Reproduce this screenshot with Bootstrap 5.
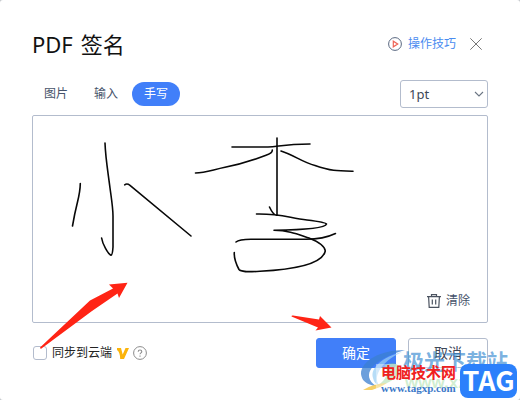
<!DOCTYPE html>
<html lang="zh-CN">
<head>
<meta charset="utf-8">
<meta name="viewport" content="width=device-width, initial-scale=1">
<title>PDF 签名</title>
<link href="https://cdn.jsdelivr.net/npm/bootstrap@5.3.0/dist/css/bootstrap.min.css" rel="stylesheet">
<style>
  body { font-family: "Noto Sans", "Noto Sans CJK SC", sans-serif; font-size: 12px; line-height: 18px; color: #46536a; background: #c4c7cc; }
  .sign-dialog { padding: 28px 32px; min-height: 100vh; background: #fff; border-radius: 3px; }
  .sign-title { font-size: 22px; line-height: 32px; font-weight: 400; color: #111; gap: 8px; }
  .tips-link { color: #4a8cf0; gap: 6px; }
  .plain-btn { background: none; border: 0; padding: 0; color: inherit; line-height: 18px; }
  .close-btn { margin: 0 6px 0 14px; }
  .toolbar { margin-top: 20px; }
  .mode-tabs { gap: 2px; }
  .mode-tabs .nav-link { padding: 3px 12px; line-height: 18px; border-radius: 12px; color: #46536a; }
  .mode-tabs .nav-link.active { background: #417ff9; color: #fff; }
  .width-select { width: 88px; height: 28px; padding: 0 24px 0 8px; font-size: 13px; line-height: 20px; color: #3d4757; border-color: #b3bccd; border-radius: 3px; background-image: none; }
  .select-arrow { position: absolute; right: 4px; top: 9px; pointer-events: none; }
  .sign-pad { margin-top: 7px; border: 1px solid #b3bccd; border-radius: 2px; }
  .sign-pad > svg { max-width: 100%; }
  .clear-btn { position: absolute; right: 17px; bottom: 12px; gap: 5px; }
  .dialog-foot { margin-top: 15px; }
  .sync-check { width: 14px; height: 14px; margin: 0 0 0 1px; border-color: #b3bccd; }
  .sync-check.form-check-input { border-radius: 3px; }
  .sync-label { color: #222; margin: 0 5px; }
  .foot-actions { gap: 12px; }
  .foot-btn { width: 80px; height: 30px; padding: 0; font-size: 14px; line-height: 20px; border-radius: 3px; }
  .foot-ok { background: #417ff9; border-color: #417ff9; color: #fff; }
  .foot-cancel { background: #fff; border-color: #b3bccd; color: #3d4757; }
  .pointer-marks { position: absolute; left: 0; top: 0; pointer-events: none; }
  .stamps { position: absolute; right: 0; bottom: 0; width: 162px; height: 54px; pointer-events: none; white-space: nowrap; }
  .stamps > * { position: absolute; }
  .stamp-site { left: 45px; top: 2px; font: 700 21px/24px "Noto Sans CJK SC", sans-serif; color: rgba(65, 143, 211, .7); }
  .stamp-url { left: 47px; top: 27px; font: 700 17px/20px "Liberation Sans", sans-serif; color: rgba(150, 218, 150, .45); }
  .stamp-panel { left: 18px; top: 18px; width: 82px; height: 36px; background: rgba(255, 255, 255, .4); }
  .stamp-name { left: 23px; top: 17px; font: 700 15px/18px "Noto Sans CJK SC", sans-serif; color: #f02020; }
  .stamp-addr { left: 23px; top: 35px; font: 700 11px/14px "Liberation Serif", serif; color: #3b78c8; }
  .stamp-tag { right: 3px; top: 18px; width: 57px; height: 34px; border-radius: 8px; background: #2b80fb; color: #fff; font: 700 27px/31px "Noto Sans CJK SC", sans-serif; text-align: center; }
</style>
<script src="https://cdn.jsdelivr.net/npm/bootstrap@5.3.0/dist/js/bootstrap.bundle.min.js"></script>
</head>
<body>
<main class="sign-dialog position-relative overflow-hidden">
  <header class="d-flex align-items-center justify-content-between">
    <h1 class="sign-title d-flex m-0"><span>PDF</span> <span>签名</span></h1>
    <div class="d-flex align-items-center">
      <a href="#" class="tips-link d-flex align-items-center text-decoration-none">
        <svg width="14" height="14" viewBox="0 0 14 14" fill="none" aria-hidden="true"><circle cx="7" cy="7" r="6.4" stroke="#5a6880"/><path d="M5.3 4.2v5.6L9.7 7z" stroke="#ee6457" stroke-width="1.2"/></svg>
        <span>操作技巧</span>
      </a>
      <button type="button" class="plain-btn close-btn d-flex" aria-label="关闭"><svg width="12" height="12" viewBox="0 0 12 12" stroke="#777" fill="none"><path d="M.3.3l11.4 11.4M11.7.3L.3 11.7"/></svg></button>
    </div>
  </header>

  <div class="toolbar d-flex align-items-center justify-content-between">
    <nav class="mode-tabs nav nav-pills" aria-label="签名方式">
      <button type="button" class="nav-link">图片</button>
      <button type="button" class="nav-link">输入</button>
      <button type="button" class="nav-link active" aria-current="true">手写</button>
    </nav>
    <div class="position-relative">
      <select class="width-select form-select" aria-label="线宽"><option>1pt</option><option>2pt</option><option>3pt</option></select>
      <svg class="select-arrow" width="10" height="10" viewBox="0 0 10 10" fill="none" stroke="#6b7583" stroke-width="1.1"><path d="M1 3l4 4 4-4"/></svg>
    </div>
  </div>

  <section class="sign-pad position-relative" aria-label="手写区域">
    <svg class="d-block" width="454" height="206" viewBox="33 116 454 206" fill="none" stroke="#080808" stroke-width="1.6" stroke-linecap="round" stroke-linejoin="round" role="img" aria-label="小李">
      <path d="M80.300 183.500Q80.200 191 77.500 202Q74.500 214 72.500 226"/>
      <path d="M105 143C105.500 158 108 172 110 188C111.500 199 113 208 113 216V247Q112.500 255 111 255.300C108 254 102.500 244 101.600 238"/>
      <path d="M124.700 184.800Q127 183 130 185.300L191 236"/>
      <path d="M232 147H268C278 147 283 144 310 144"/>
      <path d="M277 138V215"/>
      <path d="M272.300 150Q272.500 153 266 155.300C251 161 239 164.500 225 167.300C212 170 205 173 195.500 173"/>
      <path d="M281 151C294 155 302 162 315 165.500C331 171 337 171 353 171.300"/>
      <path d="M269.500 207Q273 214.500 276 215.300M256.500 214C281 213.500 289 218 307 220C319 221.500 326 222.500 326.500 224C325 229 295 230 274 230.300C289 230.500 297 234 309 238C319 242 325 247 325.300 251C322 266 285 270 260 271.300C247 272 241 272 239 269.500C235 262 234 257 234.300 252.500"/>
      <path d="M236 242Q239 239.500 251 239.300H306C318 239.300 326 238 335.500 233.500"/>
    </svg>
    <button type="button" class="clear-btn plain-btn d-flex align-items-center">
      <svg width="14" height="16" viewBox="0 0 14 16" fill="none" stroke="#4b5360" stroke-width="1.2" aria-hidden="true"><path d="M0 3.600h14M4.500 3.500V1.600h5v1.900M1.600 3.600l.6 10.800h9.600l.6-10.800M5.300 6.500v5M8.700 6.500v5"/></svg>
      <span>清除</span>
    </button>
  </section>

  <footer class="dialog-foot d-flex align-items-center justify-content-between">
    <div class="d-flex align-items-center">
      <input class="form-check-input sync-check" type="checkbox" id="sync">
      <label class="sync-label" for="sync">同步到云端</label>
      <svg width="12" height="11" viewBox="0 0 12 11" aria-hidden="true"><path d="M0 0h4l1.700 6.500L8.500 0H12L7 11H3.200Q3 4 0 2z" fill="#fbb40b"/></svg>
      <button type="button" class="plain-btn d-flex ms-1" aria-label="帮助"><svg width="15" height="14" viewBox="0 0 15 14" fill="none" stroke="#8c8c8c"><circle cx="7" cy="7" r="6.4"/><path d="M5.200 5.800Q5.200 4 7 4T8.800 5.700C8.800 6.800 7 6.900 7 8.300M7 9.500v1.200" stroke-width="1.100"/></svg></button>
    </div>
    <div class="foot-actions d-flex">
      <button type="button" class="foot-btn foot-ok btn">确定</button>
      <button type="button" class="foot-btn foot-cancel btn">取消</button>
    </div>
  </footer>

  <svg class="pointer-marks" width="520" height="400" viewBox="0 0 520 400" fill="#ff2415" aria-hidden="true">
    <path d="M40 347.500L90 300.500 113 288.500 109 284.500 127.500 282.800 119 298 117.500 293.500 92 311 40.800 349Z"/>
    <path d="M291.500 316.500Q291.500 315.300 293 315.600L319 319.500 320 316 331.500 327.500 315.500 330.500 318 327.500Z"/>
  </svg>

  <div class="stamps" aria-hidden="true">
    <svg width="50" height="46" viewBox="358 348 50 46" style="left:0;top:2px">
      <path d="M405 350C380 350 361 361 361 374Q362 384 376 386C361 376 370 360 405 350Z" fill="#3b7fd0" opacity=".75"/>
      <path d="M402 352C382 357 370 368 373 378Q374 384 381 387C371 379 380 362 402 352Z" fill="#99cff4" opacity=".7"/>
      <path d="M385 365Q397 361 400 368C398 379 388 384 377 386Q391 377 385 365Z" fill="#8fd08d" opacity=".7"/>
      <path d="M363 390Q372 384 387 383Q380 388 372 390Z" fill="#f5c84c" opacity=".85"/>
    </svg>
    <span class="stamp-panel"></span>
    <span class="stamp-site">极光下载站</span>
    <span class="stamp-url">www.xz7.com</span>
    <span class="stamp-name">电脑技术网</span>
    <span class="stamp-addr">www.tagxp.com</span>
    <span class="stamp-tag">TAG</span>
  </div>
</main>
</body>
</html>
